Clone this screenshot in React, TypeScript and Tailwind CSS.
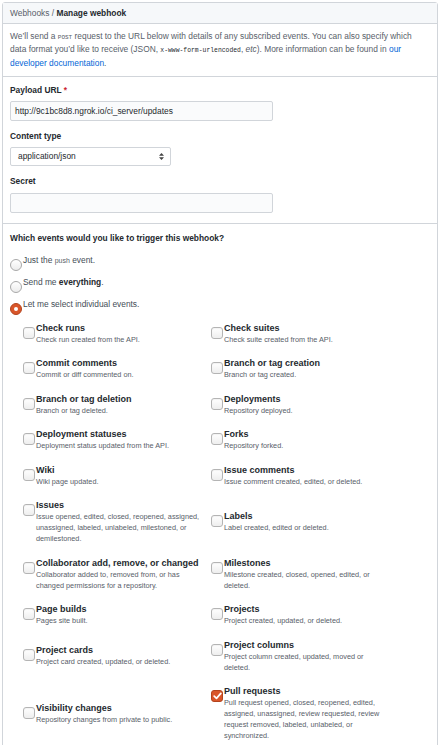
import React from 'react';

type EventItem = {
  title: string;
  desc: string;
  checked?: boolean;
};

const events: EventItem[] = [
  { title: 'Check runs', desc: 'Check run created from the API.' },
  { title: 'Check suites', desc: 'Check suite created from the API.' },
  { title: 'Commit comments', desc: 'Commit or diff commented on.' },
  { title: 'Branch or tag creation', desc: 'Branch or tag created.' },
  { title: 'Branch or tag deletion', desc: 'Branch or tag deleted.' },
  { title: 'Deployments', desc: 'Repository deployed.' },
  { title: 'Deployment statuses', desc: 'Deployment status updated from the API.' },
  { title: 'Forks', desc: 'Repository forked.' },
  { title: 'Wiki', desc: 'Wiki page updated.' },
  { title: 'Issue comments', desc: 'Issue comment created, edited, or deleted.' },
  {
    title: 'Issues',
    desc: 'Issue opened, edited, closed, reopened, assigned, unassigned, labeled, unlabeled, milestoned, or demilestoned.',
  },
  { title: 'Labels', desc: 'Label created, edited or deleted.' },
  {
    title: 'Collaborator add, remove, or changed',
    desc: 'Collaborator added to, removed from, or has changed permissions for a repository.',
  },
  { title: 'Milestones', desc: 'Milestone created, closed, opened, edited, or deleted.' },
  { title: 'Page builds', desc: 'Pages site built.' },
  { title: 'Projects', desc: 'Project created, updated, or deleted.' },
  { title: 'Project cards', desc: 'Project card created, updated, or deleted.' },
  { title: 'Project columns', desc: 'Project column created, updated, moved or deleted.' },
  { title: 'Visibility changes', desc: 'Repository changes from private to public.' },
  {
    title: 'Pull requests',
    desc: 'Pull request opened, closed, reopened, edited, assigned, unassigned, review requested, review request removed, labeled, unlabeled, or synchronized.',
    checked: true,
  },
];

const Radio: React.FC<{ checked?: boolean }> = ({ checked }) =>
  checked ? (
    <span className="mt-[5px] mr-[1px] w-[12px] h-[12px] rounded-full bg-[#d9562a] border border-[#b3441e] flex items-center justify-center shrink-0">
      <span className="w-[4px] h-[4px] rounded-full bg-white" />
    </span>
  ) : (
    <span className="mt-[5px] mr-[1px] w-[12px] h-[12px] rounded-full border border-[#a8a8a8] bg-gradient-to-b from-white to-[#ececec] shrink-0" />
  );

const Checkbox: React.FC<{ checked?: boolean }> = ({ checked }) =>
  checked ? (
    <span className="mt-[4px] w-[12px] h-[12px] rounded-[3px] bg-[#d9562a] border border-[#b3441e] flex items-center justify-center shrink-0">
      <svg width="9" height="8" viewBox="0 0 9 8">
        <path d="M1.2 4.2 L3.5 6.4 L7.8 1.4" fill="none" stroke="white" strokeWidth="1.7" strokeLinecap="round" strokeLinejoin="round" />
      </svg>
    </span>
  ) : (
    <span className="mt-[4px] w-[12px] h-[12px] rounded-[3px] border border-[#b4b4b4] bg-gradient-to-b from-white to-[#eeeeee] shadow-[inset_0_1px_1px_rgba(0,0,0,0.05)] shrink-0" />
  );

export default function App() {
  return (
    <div
      className="min-h-screen bg-white pt-[2px] pl-[2px] text-[#24292e] text-[8.4px]"
      style={{ fontFamily: '"Liberation Sans", Arial, sans-serif' }}
    >
      <div className="w-[436px] border border-[#d1d5da] rounded-[3px]">
        <div className="h-[21px] bg-[#f6f8fa] border-b border-[#d1d5da] px-[7px] flex items-center">
          <span className="text-[#586069]">Webhooks</span>
          <span className="text-[#586069]">&nbsp;/&nbsp;</span>
          <span className="font-bold">Manage webhook</span>
        </div>

        <div className="border-b border-[#d1d5da] px-[7px] pt-[5.5px] pb-[5.5px] leading-[13.6px] text-[#586069]">
          We’ll send a{' '}
          <span className="text-[6px] leading-[10px] uppercase font-['Liberation_Mono',monospace]">post</span>{' '}
          request to the URL below with details of any subscribed events. You can also specify which
          data format you’d like to receive (JSON,{' '}
          <code className="text-[6.4px] leading-[10px] font-['Liberation_Mono',monospace] text-[#24292e]">
            x-www-form-urlencoded
          </code>
          , <em>etc</em>). More information can be found in{' '}
          <span className="text-[#0366d6]">our developer documentation</span>.
        </div>

        <div className="border-b border-[#d1d5da] px-[7px] pt-[7px] pb-[10px] flex flex-col">
          <div className="font-bold leading-[12px]">
            Payload URL <span className="text-[#cb2431]">*</span>
          </div>
          <div className="mt-[5.5px] w-[263px] h-[20px] bg-[#fafbfc] border border-[#d1d5da] rounded-[2px] px-[4px] flex items-center">
            http://9c1bc8d8.ngrok.io/ci_server/updates
          </div>

          <div className="mt-[8.5px] font-bold leading-[12px]">Content type</div>
          <div className="mt-[5.5px] w-[161px] h-[19px] bg-white border border-[#d1d5da] rounded-[2px] pl-[7px] pr-[6px] flex items-center justify-between">
            <span>application/json</span>
            <svg width="5" height="7" viewBox="0 0 5 7">
              <path d="M2.5 0 L5 2.8 L0 2.8 Z M2.5 7 L5 4.2 L0 4.2 Z" fill="#444" />
            </svg>
          </div>

          <div className="mt-[8.5px] font-bold leading-[12px]">Secret</div>
          <div className="mt-[6px] w-[263px] h-[20px] bg-[#fafbfc] border border-[#d1d5da] rounded-[2px]" />
        </div>

        <div className="px-[7px] pt-[8px] pb-[10px]">
          <div className="font-bold leading-[12px]">Which events would you like to trigger this webhook?</div>

          <div className="mt-[10px] flex flex-col text-[#444d56]">
            <div className="h-[22px] flex items-start leading-[12px]">
              <Radio />
              <span>
                Just the{' '}
                <span className="text-[7px] text-[#586069]">push</span>{' '}
                event.
              </span>
            </div>
            <div className="h-[22px] flex items-start leading-[12px]">
              <Radio />
              <span>
                Send me <span className="font-bold text-[#24292e]">everything</span>.
              </span>
            </div>
            <div className="h-[22px] flex items-start leading-[12px]">
              <Radio checked />
              <span>Let me select individual events.</span>
            </div>
          </div>

          <div className="mt-[3px] ml-[13px] grid grid-cols-[188px_188px] gap-y-[13.5px] items-center">
            {events.map((ev, i) => (
              <div key={ev.title} className="flex items-start">
                <Checkbox checked={ev.checked} />
                <div className={i % 2 === 0 ? 'ml-[1px] w-[168px]' : 'ml-[1px] w-[156px]'}>
                  <div className="font-bold text-[9px] leading-[11px] text-[#24292e]">{ev.title}</div>
                  <div className="text-[7.3px] leading-[11px] text-[#586069]">{ev.desc}</div>
                </div>
              </div>
            ))}
          </div>
        </div>
      </div>
    </div>
  );
}
